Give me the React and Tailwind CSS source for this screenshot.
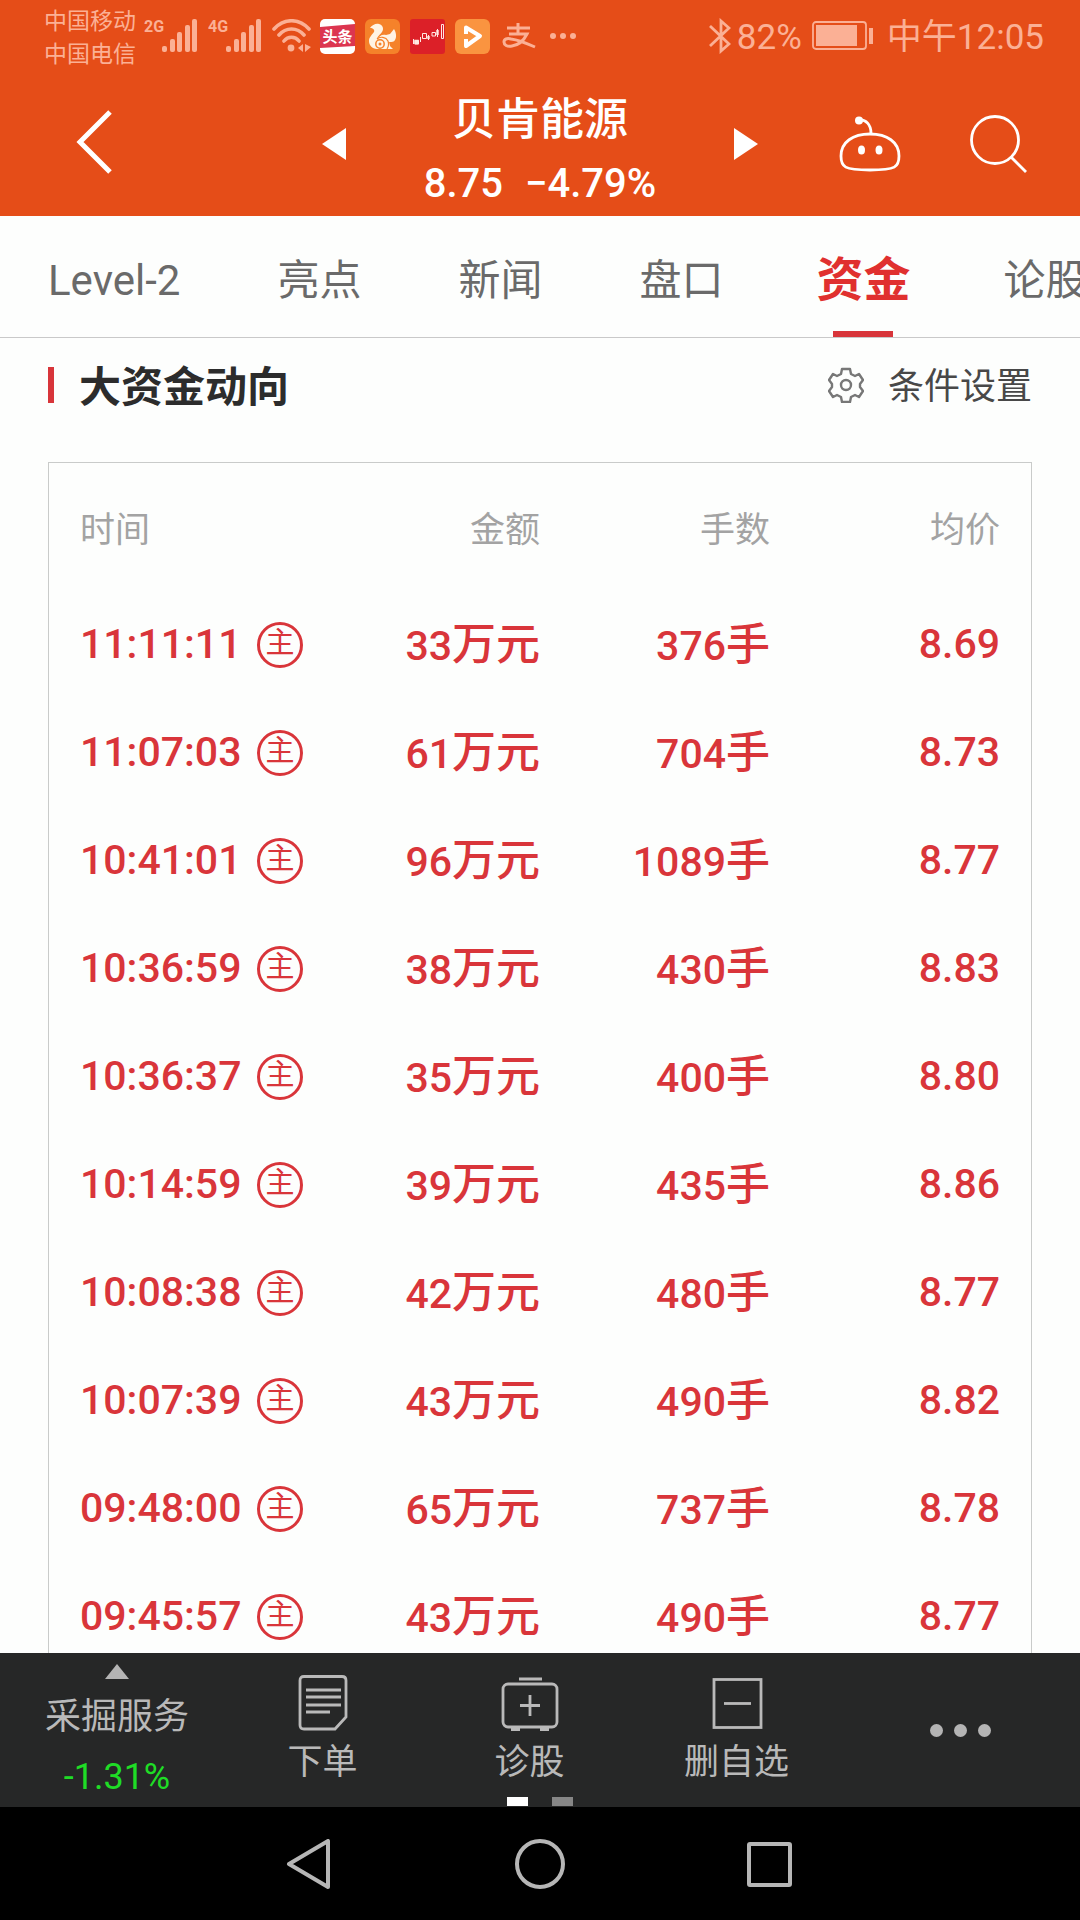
import React, { useState } from "react";

// --- DATA ---
const TABS = ["Level-2", "亮点", "新闻", "盘口", "资金", "论股"];

const ORDERS = [
  { time: "11:11:11", amount: 33, lots: 376, price: "8.69" },
  { time: "11:07:03", amount: 61, lots: 704, price: "8.73" },
  { time: "10:41:01", amount: 96, lots: 1089, price: "8.77" },
  { time: "10:36:59", amount: 38, lots: 430, price: "8.83" },
  { time: "10:36:37", amount: 35, lots: 400, price: "8.80" },
  { time: "10:14:59", amount: 39, lots: 435, price: "8.86" },
  { time: "10:08:38", amount: 42, lots: 480, price: "8.77" },
  { time: "10:07:39", amount: 43, lots: 490, price: "8.82" },
  { time: "09:48:00", amount: 65, lots: 737, price: "8.78" },
  { time: "09:45:57", amount: 43, lots: 490, price: "8.77" },
];

// --- STATUS BAR ICONS ---
const Signal = ({ label }) => (
  <div className="flex items-start">
    <span className="w-[18px] text-[16px] leading-[16px] font-bold">{label}</span>
    <svg viewBox="0 0 36 34" className="w-9 h-[34px]" fill="currentColor">
      <rect x="0" y="27" width="5" height="6" rx="2" />
      <rect x="8" y="20" width="5" height="13" rx="2" />
      <rect x="15" y="13" width="5" height="20" rx="2" />
      <rect x="23" y="6" width="5" height="27" rx="2" />
      <rect x="30" y="0" width="5" height="33" rx="2" />
    </svg>
  </div>
);

const Wifi = () => (
  <svg viewBox="0 0 40 34" className="w-10 h-[34px]" fill="none" stroke="currentColor" strokeWidth="3.6" strokeLinecap="round">
    <path d="M2 10C12-1 27-1 37 10M7 16c7-8 18-8 25 0M12 22c4-5 11-5 15 0" />
    <circle cx="19" cy="29" r="3.4" fill="currentColor" stroke="none" />
    <path d="M31 25v8l-5-4zM33 25v8l6-5z" fill="currentColor" stroke="none" />
  </svg>
);

const Toutiao = () => (
  <svg viewBox="0 0 35 35" className="w-[35px] h-[35px]">
    <rect width="35" height="35" rx="5" fill="#fff" />
    <path d="M0 8 35 5v22L0 29z" fill="#dc3550" />
    <text x="17.500" y="23" textAnchor="middle" fontSize="15" fontWeight="700" fill="#fff">头条</text>
  </svg>
);

const Squirrel = () => (
  <svg viewBox="0 0 35 35" className="w-[35px] h-[35px]">
    <rect width="35" height="35" rx="6" fill="#f5822a" />
    <path d="M5 9c2-3 6-5 9-4 4 1 5 5 3 8s-5 4-5 8c2-4 5-6 9-5l4-1 4-5c2 3 3 8 1 11-1 2-3 2-6 2l1 4 3 3H12c-5 0-8-4-8-8s3-6 5-9c1-2-1-4-4-4z" fill="#fff3e4" />
    <path d="M12 20c3-3 9-2 11 2 1 3 1 5-1 8" fill="none" stroke="#f5822a" strokeWidth="1.2" />
    <circle cx="15" cy="25" r="4.200" fill="none" stroke="#f5822a" strokeWidth="1.500" />
    <circle cx="15" cy="25" r="1.500" fill="#f5822a" />
  </svg>
);

const Candles = () => (
  <svg viewBox="0 0 35 35" className="w-[35px] h-[35px]" fill="none" stroke="#ffe9e2">
    <rect width="35" height="35" rx="3" fill="#dc2028" stroke="none" />
    <path d="M3.500 20v5M5 21.500h3.500v3.500H5zM10.500 18v5M12.500 14.500h4v5h-4zM18.500 16v5M22 13.500h3.500v3.500H22zM27.500 10v8M31.500 5.500h2v14h-2z" />
    <path d="M18.500 17v3M27.500 11v5M5.500 22h2v2h-2z" strokeWidth="2.400" />
  </svg>
);

const Player = () => (
  <svg viewBox="0 0 35 35" className="w-[35px] h-[35px]" fill="none">
    <rect width="35" height="35" rx="6" fill="#fa9440" />
    <path d="M11 15V8.500L25 17 11 27v-7" stroke="#fff" strokeWidth="4" strokeLinejoin="round" />
  </svg>
);

const Bluetooth = () => (
  <svg viewBox="0 0 22 36" className="w-[22px] h-9" fill="none" stroke="currentColor" strokeWidth="2.800">
    <path d="M1 8l19 18-8 7V3l8 7L1 28" />
  </svg>
);

const Battery = () => (
  <svg viewBox="0 0 61 30" className="w-[61px] h-[30px]" fill="none">
    <rect x="1" y="1" width="53" height="27" rx="3" stroke="currentColor" strokeWidth="1.800" />
    <rect x="4" y="4" width="41" height="21" fill="currentColor" />
    <rect x="57" y="7" width="4" height="16" fill="currentColor" />
  </svg>
);

const StatusBar = () => (
  <div className="h-[72px] pl-11 pr-9 flex items-center justify-between text-[#fbb095]">
    <div className="flex items-center">
      <div className="text-[23px] leading-[33px] pt-1">
        <p>中国移动</p>
        <p>中国电信</p>
      </div>
      <div className="ml-2 flex items-center gap-[10px]">
        <Signal label="2G" />
        <Signal label="4G" />
        <Wifi />
      </div>
      <div className="ml-2 flex items-center gap-[10px]">
        <Toutiao />
        <Squirrel />
        <Candles />
        <Player />
      </div>
      <svg viewBox="0 0 34 26" className="ml-3 w-[34px] h-[26px]" fill="none" stroke="currentColor" strokeWidth="3">
        <path d="M5 5h23M16 0v11M7 11h18c-3 6-8 11-15 12-5 1-8-1-8-4s3-4 7-3c8 1 15 4 24 8" />
      </svg>
      <svg viewBox="0 0 26 6" className="ml-[14px] w-[26px] h-[6px]" fill="currentColor">
        <circle cx="3" cy="3" r="3" />
        <circle cx="13" cy="3" r="3" />
        <circle cx="23" cy="3" r="3" />
      </svg>
    </div>
    <div className="flex items-center text-[35px] leading-[44px]">
      <Bluetooth />
      <span className="ml-[6px] mr-[10px] pt-1">82%</span>
      <Battery />
      <span className="ml-[14px] pt-1">中午12:05</span>
    </div>
  </div>
);

// --- HEADER ---
const Header = () => (
  <header className="shrink-0 bg-[#e54d18] text-white">
    <StatusBar />
    <div className="h-36 grid grid-cols-[1fr_436px_1fr] items-center">
      <button aria-label="返回" className="ml-[76px] mb-1 justify-self-start">
        <svg viewBox="0 0 36 64" className="w-9 h-16" fill="none" stroke="currentColor" strokeWidth="5">
          <path d="M34 2 4 32l30 30" />
        </svg>
      </button>
      <div className="flex items-center justify-between">
        <button aria-label="上一只">
          <svg viewBox="0 0 24 32" className="w-6 h-8" fill="currentColor">
            <path d="M0 16 24 0v32z" />
          </svg>
        </button>
        <div className="pt-4 text-center">
          <h1 className="text-[44px] leading-[63px] font-medium">贝肯能源</h1>
          <p className="flex justify-center gap-[22px] text-[40px] leading-[63px] font-medium">
            <span>8.75</span>
            <span>−4.79%</span>
          </p>
        </div>
        <button aria-label="下一只">
          <svg viewBox="0 0 24 32" className="w-6 h-8" fill="currentColor">
            <path d="M24 16 0 0v32z" />
          </svg>
        </button>
      </div>
      <div className="flex items-center justify-end gap-[69px] pr-[52px]">
        <button aria-label="智能助手">
          <svg viewBox="0 0 62 56" className="w-[62px] h-14" fill="none" stroke="currentColor" strokeWidth="2.800">
            <path d="M20 4c7-1 12 5 12 13" />
            <circle cx="20" cy="4.500" r="4" fill="currentColor" stroke="none" />
            <path d="M31 18c17 0 29 8 29 22 0 11-3 14-29 14S2 51 2 40c0-14 12-22 29-22z" />
            <ellipse cx="22.500" cy="34" rx="3.500" ry="4.500" fill="currentColor" stroke="none" />
            <ellipse cx="40" cy="34" rx="3.500" ry="4.500" fill="currentColor" stroke="none" />
          </svg>
        </button>
        <button aria-label="搜索">
          <svg viewBox="0 0 58 58" className="w-[58px] h-[58px]" fill="none" stroke="currentColor" strokeWidth="2.800">
            <circle cx="25" cy="25" r="23.500" />
            <path d="M41 42l15 15" />
          </svg>
        </button>
      </div>
    </div>
  </header>
);

// --- TABS ---
const Tabs = ({ active, onChange }) => (
  <nav className="shrink-0 h-[122px] pl-12 flex gap-[97px] overflow-hidden whitespace-nowrap border-b border-[#c9c9c9]">
    {TABS.map((tab) => (
      <button
        key={tab}
        onClick={() => onChange(tab)}
        className={`relative shrink-0 pt-2 ${
          tab === active ? "-mx-1 text-[47px] font-bold text-[#e0302f]" : "text-[42px] text-[#6a6a6a]"
        }`}
      >
        {tab}
        {tab === active && <span className="absolute bottom-0 inset-x-0 mx-auto w-[60px] h-[6px] bg-[#d8353a]"></span>}
      </button>
    ))}
  </nav>
);

// --- BIG ORDERS ---
const OrderTable = () => (
  <div className="mx-12 px-[31px] pt-9 border border-b-0 border-[#c9cbca]">
    <table className="w-full table-fixed text-right">
      <thead>
        <tr className="h-16 text-[35px] text-[#a3a3a3]">
          <th className="font-normal text-left">时间</th>
          <th className="font-normal">金额</th>
          <th className="font-normal">手数</th>
          <th className="font-normal">均价</th>
        </tr>
      </thead>
      <tbody className="text-[41px] font-medium text-[#d9353a] before:block before:h-7">
        {ORDERS.map((order) => (
          <tr key={order.time} className="h-[108px] whitespace-nowrap">
            <td>
              <div className="flex items-center text-left">
                <span className="w-[177px]">{order.time}</span>
                <span className="shrink-0 w-[46px] h-[46px] rounded-full border-3 border-current flex items-center justify-center pb-1 text-[29px] leading-none font-normal">主</span>
              </div>
            </td>
            <td>{order.amount}<span className="text-[44px]">万元</span></td>
            <td>{order.lots}<span className="text-[44px]">手</span></td>
            <td>{order.price}</td>
          </tr>
        ))}
      </tbody>
    </table>
  </div>
);

// --- BOTTOM TOOLBAR ---
const ToolButton = ({ label, children }) => (
  <button className="flex flex-col items-center pt-[21px] text-[35px] leading-[61px]">
    <svg viewBox="0 0 58 58" className="w-[58px] h-[58px]" fill="none" stroke="currentColor" strokeWidth="2.800">
      {children}
    </svg>
    {label}
  </button>
);

const Toolbar = () => (
  <div className="relative shrink-0 h-[154px] bg-[#262727] text-[#b9b9b9] grid grid-cols-[219fr_207fr_207fr_207fr_240fr]">
    <button className="pl-[15px] pt-[11px] flex flex-col items-center text-[36px]">
      <svg viewBox="0 0 24 15" className="w-6 h-[15px]" fill="#b4b4b4">
        <path d="M12 0 24 15H0z" />
      </svg>
      <span className="mt-2 leading-[60px]">采掘服务</span>
      <span className="leading-[60px] text-[#1fdc26]">-1.31%</span>
    </button>
    <ToolButton label="下单">
      <path d="M10 2.500h38q4 0 4 4V43L41 55H10q-4 0-4-4V6.500q0-4 4-4z" />
      <path d="M12 16h35M12 23h35M12 31h35M12 38h24" />
    </ToolButton>
    <ToolButton label="诊股">
      <rect x="2" y="10" width="54" height="43" rx="5" />
      <path d="M18 5h23M29 21v21M19 31.500h20" />
      <path d="M10 55h9M39 55h9" strokeWidth="4" />
    </ToolButton>
    <ToolButton label="删自选">
      <rect x="6" y="5.500" width="47" height="48" />
      <path d="M16 29.500h27" />
    </ToolButton>
    <button aria-label="更多" className="flex items-center justify-center gap-[11px]">
      <span className="w-[13px] h-[13px] rounded-full bg-[#b4b4b4]"></span>
      <span className="w-[13px] h-[13px] rounded-full bg-[#b4b4b4]"></span>
      <span className="w-[13px] h-[13px] rounded-full bg-[#b4b4b4]"></span>
    </button>
    <div className="absolute inset-x-0 bottom-px flex justify-center gap-6">
      <span className="w-[21px] h-[9px] bg-white"></span>
      <span className="w-[21px] h-[9px] bg-[#868686]"></span>
    </div>
  </div>
);

const SystemNav = () => (
  <div className="shrink-0 h-[113px] bg-black flex items-center justify-center gap-[180px] text-[#b6b6b6]">
    <button aria-label="后退">
      <svg viewBox="0 0 50 50" className="w-[50px] h-[50px]" fill="none" stroke="currentColor" strokeWidth="4" strokeLinejoin="round">
        <path d="M4 25 43 2v46z" />
      </svg>
    </button>
    <button aria-label="主页">
      <svg viewBox="0 0 50 50" className="w-[50px] h-[50px]" fill="none" stroke="currentColor" strokeWidth="4">
        <circle cx="25" cy="25" r="23" />
      </svg>
    </button>
    <button aria-label="最近任务">
      <svg viewBox="0 0 50 50" className="w-[50px] h-[50px]" fill="none" stroke="currentColor" strokeWidth="4">
        <rect x="4" y="5" width="41" height="41" rx="1" />
      </svg>
    </button>
  </div>
);

function App() {
  const [tab, setTab] = useState("资金");

  return (
    <div className="h-screen flex flex-col overflow-hidden bg-[#fdfefd] font-[Roboto,'Noto_Sans_CJK_SC',sans-serif]">
      <Header />
      <Tabs active={tab} onChange={setTab} />
      <main className="flex-1 min-h-0 overflow-hidden">
        <div className="h-[94px] mb-[30px] px-12 flex items-center justify-between">
          <h2 className="flex items-center gap-[25px] text-[42px] font-bold text-[#2c2c2c]">
            <span className="w-[6px] h-9 bg-[#d8353a]"></span>
            <span className="pt-1">大资金动向</span>
          </h2>
          <button className="flex items-center gap-6 text-[36px] text-[#484848]">
            <svg viewBox="0 0 36 36" className="w-9 h-9" fill="none" stroke="#777" strokeWidth="2.400" strokeLinejoin="round">
              <path d="M14 2h8l1 5 4 2 4-2 4 6-3 4v3l3 4-4 6-4-2-4 2-1 5h-8l-1-5-4-2-4 2-4-6 3-4v-3L1 13l4-6 4 2 4-2z" />
              <circle cx="18" cy="18" r="5" />
            </svg>
            <span className="pt-1">条件设置</span>
          </button>
        </div>
        <OrderTable />
      </main>
      <Toolbar />
      <SystemNav />
    </div>
  );
}

export default App;
